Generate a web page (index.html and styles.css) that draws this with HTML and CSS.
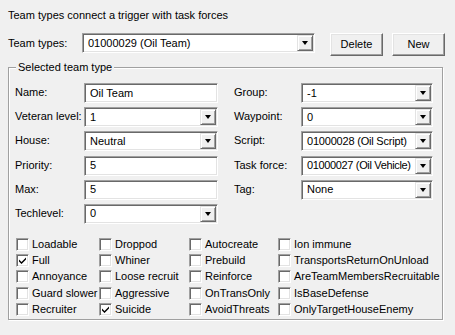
FILE: index.html
```html
<!DOCTYPE html>
<html lang="en">
<head>
  <meta charset="UTF-8" />
  <title>Team types</title>
  <link rel="stylesheet" href="styles.css">
</head>
<body>
  <div class="dialog">
    <p class="intro">Team types connect a trigger with task forces</p>

    <div class="top-row">
      <span class="label top-label">Team types:</span>
      <div class="combo team-combo"><span class="value">01000029 (Oil Team)</span><span class="drop"></span></div>
      <button class="btn">Delete</button>
      <button class="btn">New</button>
    </div>

    <div class="group">
      <span class="group-title">Selected team type</span>

      <div class="fields">
        <!-- left column -->
        <div class="col">
          <div class="row"><span class="label">Name:</span><div class="edit"><span class="value">Oil Team</span></div></div>
          <div class="row"><span class="label">Veteran level:</span><div class="combo"><span class="value">1</span><span class="drop"></span></div></div>
          <div class="row"><span class="label">House:</span><div class="combo"><span class="value">Neutral</span><span class="drop"></span></div></div>
          <div class="row"><span class="label">Priority:</span><div class="edit"><span class="value">5</span></div></div>
          <div class="row"><span class="label">Max:</span><div class="edit"><span class="value">5</span></div></div>
          <div class="row"><span class="label">Techlevel:</span><div class="combo"><span class="value">0</span><span class="drop"></span></div></div>
        </div>
        <!-- right column -->
        <div class="col col-right">
          <div class="row"><span class="label">Group:</span><div class="combo"><span class="value">-1</span><span class="drop"></span></div></div>
          <div class="row"><span class="label">Waypoint:</span><div class="combo"><span class="value">0</span><span class="drop"></span></div></div>
          <div class="row"><span class="label">Script:</span><div class="combo"><span class="value tight">01000028 (Oil Script)</span><span class="drop"></span></div></div>
          <div class="row"><span class="label">Task force:</span><div class="combo"><span class="value tighter">01000027 (Oil Vehicle)</span><span class="drop"></span></div></div>
          <div class="row"><span class="label">Tag:</span><div class="combo"><span class="value">None</span><span class="drop"></span></div></div>
        </div>
      </div>

      <div class="checks">
        <label class="check"><span class="box"></span>Loadable</label>
        <label class="check"><span class="box"></span>Droppod</label>
        <label class="check"><span class="box"></span>Autocreate</label>
        <label class="check"><span class="box"></span>Ion immune</label>

        <label class="check"><span class="box checked"><svg viewBox="0 0 9 9" width="9" height="9"><path d="M1 3.5 L3.5 6 L8 1.5 L8 3.5 L3.5 8 L1 5.5 Z" fill="#000"/></svg></span>Full</label>
        <label class="check"><span class="box"></span>Whiner</label>
        <label class="check"><span class="box"></span>Prebuild</label>
        <label class="check"><span class="box"></span>TransportsReturnOnUnload</label>

        <label class="check"><span class="box"></span>Annoyance</label>
        <label class="check"><span class="box"></span>Loose recruit</label>
        <label class="check"><span class="box"></span>Reinforce</label>
        <label class="check"><span class="box"></span>AreTeamMembersRecruitable</label>

        <label class="check"><span class="box"></span>Guard slower</label>
        <label class="check"><span class="box"></span>Aggressive</label>
        <label class="check"><span class="box"></span>OnTransOnly</label>
        <label class="check"><span class="box"></span>IsBaseDefense</label>

        <label class="check"><span class="box"></span>Recruiter</label>
        <label class="check"><span class="box checked"><svg viewBox="0 0 9 9" width="9" height="9"><path d="M1 3.5 L3.5 6 L8 1.5 L8 3.5 L3.5 8 L1 5.5 Z" fill="#000"/></svg></span>Suicide</label>
        <label class="check"><span class="box"></span>AvoidThreats</label>
        <label class="check"><span class="box"></span>OnlyTargetHouseEnemy</label>
      </div>
    </div>
  </div>
</body>
</html>
```
FILE: styles.css
```css
body {
  margin: 0;
  background: #f0f0f0;
  font-family: "Liberation Sans", Arial, sans-serif;
  font-size: 11px;
  line-height: 13px;
  color: #000;
}
.dialog {
  width: 455px;
  height: 335px;
  box-sizing: border-box;
  padding: 9px 0 0 8px;
}
.intro {
  margin: 0;
  line-height: 13px;
}

/* top row: team type selector + buttons */
.top-row {
  display: flex;
  align-items: flex-start;
  margin-top: 11px;
}
.top-label {
  width: 74px;
  padding-top: 4px;
}
.team-combo {
  width: 233px;
  height: 21px;
}
.btn {
  width: 53px;
  height: 23px;
  margin: 0 0 0 15px;
  padding: 0;
  font: inherit;
  color: #000;
  background: #f0f0f0;
  border: 1px solid;
  border-color: #fff #696969 #696969 #fff;
  box-shadow: inset -1px -1px 0 #a0a0a0, inset 1px 1px 0 #e3e3e3;
}
.btn + .btn {
  margin-left: 9px;
}

/* sunken edit + combo boxes */
.edit,
.combo {
  position: relative;
  box-sizing: border-box;
  height: 20px;
  background: #fff;
  border: 1px solid;
  border-color: #a0a0a0 #fff #fff #a0a0a0;
  box-shadow: inset 1px 1px 0 #696969, inset -1px -1px 0 #e3e3e3;
  display: flex;
  align-items: center;
  padding-left: 5px;
  white-space: nowrap;
  overflow: hidden;
}
.value.tight {
  letter-spacing: -0.2px;
}
.value.tighter {
  letter-spacing: -0.35px;
}
.drop {
  position: absolute;
  top: 1px;
  right: 1px;
  bottom: 1px;
  width: 16px;
  box-sizing: border-box;
  background: #f0f0f0;
  border: 1px solid;
  border-color: #e3e3e3 #696969 #696969 #e3e3e3;
  box-shadow: inset 1px 1px 0 #fff, inset -1px -1px 0 #a0a0a0;
}
.drop::after {
  content: "";
  position: absolute;
  left: 3.5px;
  top: 50%;
  margin-top: -2px;
  border-left: 3.5px solid transparent;
  border-right: 3.5px solid transparent;
  border-top: 4px solid #000;
}

/* group box */
.group {
  position: relative;
  width: 435px;
  height: 253px;
  box-sizing: border-box;
  margin-top: 11px;
  border: 1px solid #a0a0a0;
  box-shadow: inset 1px 1px 0 #fff, 1px 1px 0 #fff;
  padding: 15px 9px 0 6px;
}
.group-title {
  position: absolute;
  top: -7px;
  left: 7px;
  padding: 0 2px;
  background: #f0f0f0;
}
.fields {
  display: flex;
  gap: 16px;
}
.col {
  display: flex;
  flex-direction: column;
  gap: 4.2px;
}
.row {
  display: flex;
  align-items: flex-start;
}
.row .label {
  width: 69px;
  padding-top: 3px;
}
.row .edit,
.row .combo {
  width: 134px;
}
.col-right .label {
  width: 67px;
}
.col-right .combo {
  width: 132px;
}

/* checkboxes */
.checks {
  display: grid;
  grid-template-columns: 83px 90px 89px 1fr;
  grid-auto-rows: 16.25px;
  margin-top: 14px;
  padding-left: 1px;
}
.check {
  display: flex;
  align-items: flex-start;
  gap: 3px;
  line-height: 13px;
  white-space: nowrap;
}
.box {
  width: 13px;
  height: 13px;
  box-sizing: border-box;
  flex: none;
  background: #fff;
  border: 1px solid;
  border-color: #a0a0a0 #fff #fff #a0a0a0;
  box-shadow: inset 1px 1px 0 #696969, inset -1px -1px 0 #e3e3e3;
  display: flex;
  align-items: center;
  justify-content: center;
}
```
